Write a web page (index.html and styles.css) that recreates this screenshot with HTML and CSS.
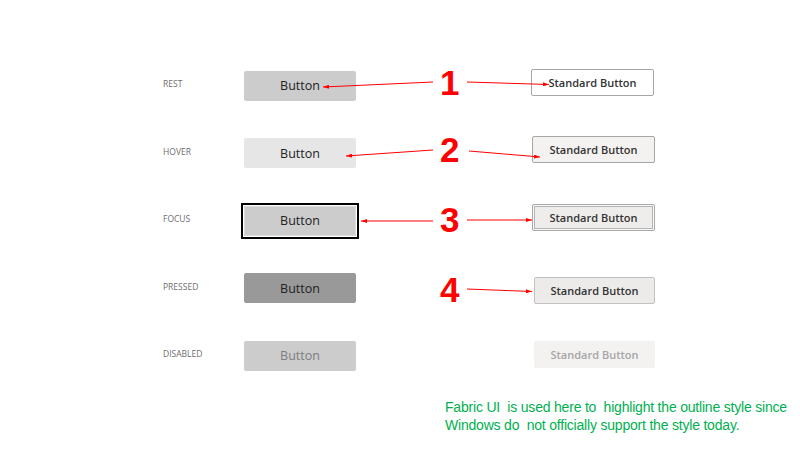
FILE: index.html
```html
<!DOCTYPE html>
<html lang="en">
<head>
    <meta charset="UTF-8">
    <meta name="viewport" content="width=device-width, initial-scale=1.0">
    <title>Button states</title>
    <link rel="stylesheet" href="styles.css">
</head>
<body>
<div class="page">
    <div class="states">
        <div class="row">
            <span class="label">REST</span>
            <div class="cell"><button class="btn">Button</button></div>
            <span class="num">1</span>
            <div class="cell"><button class="std">Standard Button</button></div>
        </div>
        <div class="row">
            <span class="label">HOVER</span>
            <div class="cell"><button class="btn btn-hover">Button</button></div>
            <span class="num">2</span>
            <div class="cell"><button class="std std-hover">Standard Button</button></div>
        </div>
        <div class="row">
            <span class="label">FOCUS</span>
            <div class="cell"><button class="btn btn-focus">Button</button></div>
            <span class="num num-focus">3</span>
            <div class="cell"><button class="std std-focus">Standard Button</button></div>
        </div>
        <div class="row">
            <span class="label">PRESSED</span>
            <div class="cell"><button class="btn btn-pressed">Button</button></div>
            <span class="num num-pressed">4</span>
            <div class="cell"><button class="std std-pressed">Standard Button</button></div>
        </div>
        <div class="row">
            <span class="label">DISABLED</span>
            <div class="cell"><button class="btn btn-disabled">Button</button></div>
            <span class="num"></span>
            <div class="cell"><button class="std std-disabled">Standard Button</button></div>
        </div>
    </div>

    <p class="note">Fabric UI&nbsp; is used here to&nbsp; highlight the outline style since<br>Windows do&nbsp; not officially support the style today.</p>

    <!-- annotation arrows -->
    <svg class="arrows" width="800" height="450" viewBox="0 0 800 450">
        <defs>
            <marker id="head" markerWidth="6" markerHeight="4" refX="6" refY="2" orient="auto" markerUnits="userSpaceOnUse">
                <path d="M0 0 L6 2 L0 4 Z" fill="#ff0000"/>
            </marker>
        </defs>
        <g stroke="#ff0000" stroke-width="1" fill="none" marker-end="url(#head)">
            <line x1="433" y1="82" x2="323" y2="87"/>
            <line x1="467" y1="82" x2="549" y2="84.5"/>
            <line x1="433" y1="150" x2="346" y2="156"/>
            <line x1="469" y1="151" x2="540" y2="157"/>
            <line x1="433" y1="221" x2="361" y2="221"/>
            <line x1="467" y1="220" x2="532" y2="220"/>
            <line x1="467" y1="289" x2="532" y2="291.5"/>
        </g>
    </svg>
</div>
</body>
</html>
```

FILE: styles.css
```css
body {
    margin: 0;
    background: #ffffff;
}

.page {
    position: relative;
    width: 800px;
    height: 450px;
    overflow: hidden;
}

.states {
    padding-top: 52px;
    padding-left: 163px;
}

.row {
    display: grid;
    grid-template-columns: 81px 112px 175px 124px;
    height: 67.5px;
    align-items: center;
}

.cell {
    display: flex;
    align-items: center;
}

.label {
    font-family: "Open Sans", "Noto Sans", sans-serif;
    font-size: 8.5px;
    color: #6e6e6e;
    margin-bottom: 4px;
}

/* left column: plain windows style buttons */
.btn {
    width: 112px;
    height: 30px;
    border: none;
    border-radius: 2px;
    background: #cccccc;
    color: #222222;
    font-family: "Open Sans", "Noto Sans", sans-serif;
    font-size: 12.5px;
    padding: 0;
}
.btn-hover { background: #e6e6e6; }
.btn-focus {
    border-radius: 0;
    box-shadow: inset 0 0 0 1px #dadada, 0 0 0 1px #ffffff, 0 0 0 3px #000000;
}
.btn-pressed { background: #999999; }
.btn-disabled { color: #7d7d7d; }

.num {
    font-family: "Liberation Sans", Arial, sans-serif;
    font-weight: bold;
    font-size: 35px;
    color: #ff0000;
    padding-left: 84px;
    margin-bottom: 7px;
    line-height: 1;
}
.num-focus { margin-bottom: 2px; }
.num-pressed { margin-bottom: 0; margin-top: 2px; }

/* right column: fabric ui standard buttons */
.std {
    width: 123px;
    height: 27px;
    border: 1px solid #a6a6a6;
    border-radius: 2px;
    background: #ffffff;
    color: #333333;
    font-family: "Open Sans", "Noto Sans", sans-serif;
    font-size: 11px;
    font-weight: 600;
    padding: 0;
    margin-bottom: 7px;
}
.std-hover {
    background: #f3f2f1;
    margin-left: 1px;
}
.std-focus {
    background: #eeedec;
    border-color: #a8a8a8;
    box-shadow: inset 0 0 0 1px #fafafa, inset 0 0 0 2px #b3b3b3;
    margin-left: 1px;
    margin-bottom: 6px;
}
.std-pressed {
    background: #edebe9;
    border-color: #c2c2c2;
    margin-left: 3px;
    margin-bottom: 0;
    margin-top: 4px;
}
.std-disabled {
    background: #f3f2f1;
    border-color: #f3f2f1;
    color: #a6a6a6;
    margin-left: 3px;
    margin-bottom: 2px;
}

.note {
    position: absolute;
    left: 445px;
    top: 398px;
    margin: 0;
    font-family: "Liberation Sans", Arial, sans-serif;
    font-size: 14px;
    line-height: 18px;
    color: #00b050;
    letter-spacing: -0.2px;
}

.arrows {
    position: absolute;
    left: 0;
    top: 0;
    pointer-events: none;
}
```
